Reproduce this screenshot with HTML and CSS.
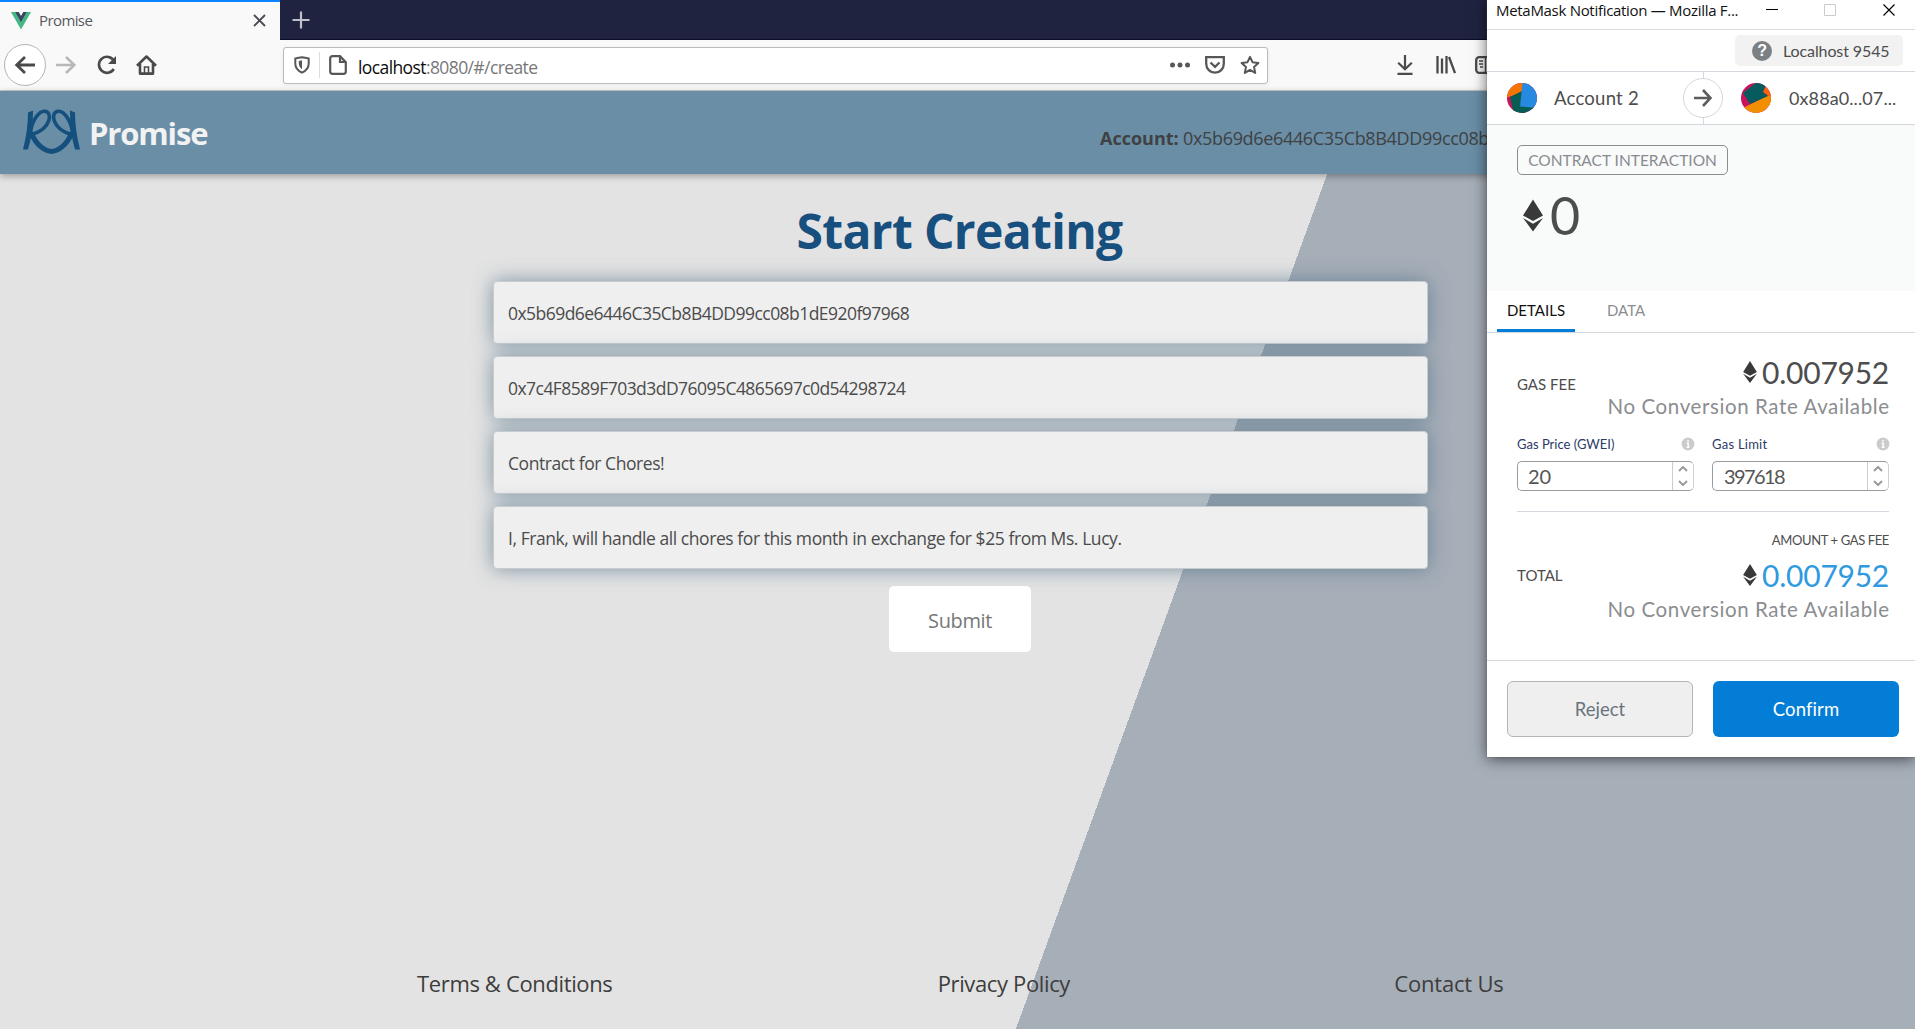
FILE: index.html
```html
<!DOCTYPE html>
<html lang="en">
<head>
<meta charset="utf-8">
<title>Promise</title>
<link rel="stylesheet" href="styles.css">
</head>
<body>
<svg class="defs" width="0" height="0" aria-hidden="true">
  <symbol id="eth" viewBox="0 0 20 32"><path fill="#393939" d="M10 0 20 16 10 21.5 0 16ZM0 18.5 10 24.2 20 18.5 10 32Z"/></symbol>
  <symbol id="info" viewBox="0 0 14 14"><circle cx="7" cy="7" r="6.4" fill="#cbcbcb"/><path d="M7 3.1v1.7M5.7 6.3h1.5v3.6M5.5 10.3h3.1" fill="none" stroke="#fff" stroke-width="1.5"/></symbol>
</svg>
<div class="browser">
  <div class="tabs">
    <div class="tab">
      <svg width="20" height="18" viewBox="0 0 20 18"><path fill="#41b883" d="M0 0h4l6 10.5L16 0h4L10 17.5Z"/><path fill="#35495e" d="M4 0h3.7L10 4l2.3-4H16l-6 10.5Z"/></svg>
      <span class="tab-name">Promise</span>
      <svg width="13" height="13" viewBox="0 0 13 13"><path d="m1 1 11 11M12 1 1 12" stroke="#4a4a4f" stroke-width="1.8"/></svg>
    </div>
    <svg class="plus" width="18" height="18" viewBox="0 0 18 18"><path d="M9 .5v17M.5 9h17" stroke="#c0c0c8" stroke-width="2.2"/></svg>
  </div>
  <div class="toolbar">
    <span class="back"><svg width="22" height="20" viewBox="0 0 22 20"><path d="M21 10H3m8-8-8.3 8 8.3 8" fill="none" stroke="#4a4a4b" stroke-width="2.8"/></svg></span>
    <svg class="fwd" width="22" height="20" viewBox="0 0 22 20"><path d="M1 10h18m-8-8 8.300 8-8.300 8" fill="none" stroke="#b8b8b9" stroke-width="2.6"/></svg>
    <svg class="reload" width="20" height="20" viewBox="0 0 20 20"><path d="M17 6A8 8 0 1 0 16.800 14" fill="none" stroke="#4a4a4b" stroke-width="2.6"/><path d="M19 1v8h-8Z" fill="#4a4a4b"/></svg>
    <svg class="home" width="21" height="20" viewBox="0 0 21 20"><path d="m1 10.700 9.500-9.200 9.500 9.200M4 9v9.600h13V9" fill="none" stroke="#4a4a4b" stroke-width="2.6" stroke-linejoin="round"/><path d="M8.500 18v-6h4v6" fill="none" stroke="#4a4a4b" stroke-width="1.600"/></svg>
    <div class="address">
      <svg width="16" height="18" viewBox="0 0 16 18"><path d="M1.300 2.500Q5 1.500 8 1.200q3 .3 6.700 1.300v5c0 4.500-3 7.500-6.700 9.200C4.300 15 1.300 12 1.300 7.500Z" fill="none" stroke="#57575a" stroke-width="2"/><path d="M8 4.300v9C5.800 11.500 4.800 9.700 4.800 7.500V5Z" fill="#57575a"/></svg>
      <i class="rule"></i>
      <svg width="18" height="20" viewBox="0 0 18 20"><path d="M3.500 1.200H11l5.800 6v9.300q0 2.300-2.300 2.300h-11Q1.200 18.800 1.200 16.500v-13q0-2.300 2.300-2.300ZM11 1.500V7h5.500" fill="none" stroke="#57575a" stroke-width="2.200"/></svg>
      <span class="url"><b>localhost</b>:8080/#/create</span>
      <svg class="dots" width="20" height="6" viewBox="0 0 20 6"><g fill="#57575a"><circle cx="2.500" cy="3" r="2.500"/><circle cx="10" cy="3" r="2.500"/><circle cx="17.500" cy="3" r="2.500"/></g></svg>
      <svg class="pocket" width="20" height="18" viewBox="0 0 20 18"><path d="M1.200 1.200h17.600v6.500c0 5.200-4 9-8.800 9s-8.800-3.800-8.800-9ZM5.500 6.500 10 10.800l4.500-4.300" fill="none" stroke="#57575a" stroke-width="2.300"/></svg>
      <svg width="20" height="20" viewBox="0 0 20 20"><path d="m10 1.800 2.500 5.400 5.900.7-4.400 4 1.200 6-5.200-3-5.200 3 1.200-6-4.400-4 5.900-.7Z" fill="none" stroke="#57575a" stroke-width="2" stroke-linejoin="round"/></svg>
    </div>
    <svg class="download" width="16" height="20" viewBox="0 0 16 20"><path d="M8 0v14M1.200 7.800 8 14.300l6.800-6.500M.5 18.800h15" fill="none" stroke="#4a4a4b" stroke-width="2.200"/></svg>
    <svg class="library" width="20" height="18" viewBox="0 0 20 18"><path d="M1.500 0v17.500M6 2.500v15M10.500 0v17.500M13 1l6 16" fill="none" stroke="#4a4a4b" stroke-width="2.300"/></svg>
    <svg class="sidebar" width="22" height="18" viewBox="0 0 22 18"><rect x="1.200" y="1.200" width="19.600" height="15.600" rx="3" fill="none" stroke="#4a4a4b" stroke-width="2.300"/><path d="M10.500 1v16M4 5h4M4 8h4M5 11h3" fill="none" stroke="#4a4a4b" stroke-width="1.500"/></svg>
  </div>
</div>
<div class="page">
  <header class="site-head">
    <svg class="logo" width="59" height="48" viewBox="0 0 59 48"><defs><g id="half"><path fill="#154f7e" d="M6 4.500 11 2.500Q11 26 6 41.500H1Q6 22 6 4.500Z"/><path d="M8.500 26C9 13 17 3 22.500 3.200 31 3.500 29.500 20 10.500 26.500" fill="none" stroke="#154f7e" stroke-width="3.600"/><path d="M9 24.500C14 37 23 43.500 30 43.500" fill="none" stroke="#154f7e" stroke-width="5"/></g></defs><use href="#half"/><use href="#half" transform="matrix(-1 0 0 1 59 0)"/></svg>
    <strong class="brand">Promise</strong>
    <p class="account"><b>Account:</b> 0x5b69d6e6446C35Cb8B4DD99cc08b1dE920f97968</p>
  </header>
  <main class="content">
    <h1 class="title">Start Creating</h1>
    <form class="form">
      <div class="field hex">0x5b69d6e6446C35Cb8B4DD99cc08b1dE920f97968</div>
      <div class="field hex">0x7c4F8589F703d3dD76095C4865697c0d54298724</div>
      <div class="field">Contract for Chores!</div>
      <div class="field">I, Frank, will handle all chores for this month in exchange for $25 from Ms. Lucy.</div>
      <button class="submit" type="button">Submit</button>
    </form>
  </main>
  <footer class="foot"><a class="terms">Terms &amp; Conditions</a><a class="privacy">Privacy Policy</a><a class="contact">Contact Us</a></footer>
</div>
<aside class="popup">
  <div class="p-title"><span class="p-name">MetaMask Notification — Mozilla F...</span>
    <svg width="130" height="14" viewBox="0 0 130 14"><path d="M0 6.500h12M117.500 1.500l11 11m0-11-11 11" fill="none" stroke="#000" stroke-width="1.200"/><path d="M58.500 1.500h11v11h-11Z" fill="none" stroke="#ccc"/></svg>
  </div>
  <div class="p-network"><div class="network"><span class="q">?</span><span class="net-name">Localhost 9545</span></div></div>
  <div class="p-accounts">
    <svg width="30" height="30" viewBox="0 0 30 30"><clipPath id="c"><circle cx="15" cy="15" r="15"/></clipPath><g clip-path="url(#c)"><path fill="#c8145b" d="M0 0h30v30H0Z"/><path fill="#f57402" d="M0 0h16v9L2 14 0 14Z"/><path fill="#075c54" d="m3 14 12-6 12 16-1 8H7Z"/><path fill="#258ae0" d="M15.500 0H30v25l-17-1.500Z"/></g></svg>
    <span class="from">Account 2</span>
    <span class="arrow"><svg width="18" height="18" viewBox="0 0 18 18"><path d="M0 9h16M9 1l7.500 8L9 17" fill="none" stroke="#5b5d5f" stroke-width="2.600"/></svg></span>
    <svg width="30" height="30" viewBox="0 0 30 30"><g clip-path="url(#c)"><path fill="#c8145b" d="M0 0h30v30H0Z"/><path fill="#f28e02" d="M2 25 28 12h2v18H5Z"/><path fill="#055b5d" d="M2 10 16-1l9 3-3 7 5 4L9 21Z"/><path fill="#fb640a" d="m25 3-3 6 5.500 4H30V5Z"/></g></svg>
    <span class="to">0x88a0...07...</span>
  </div>
  <div class="p-summary"><div class="tag"><span>CONTRACT INTERACTION</span></div><div class="zero"><svg width="20" height="33"><use href="#eth"/></svg><span>0</span></div></div>
  <nav class="p-tabs"><span class="on">DETAILS</span><span class="off">DATA</span></nav>
  <section class="p-details">
    <div class="fee"><span class="lab gas">GAS FEE</span><div class="vals"><div class="amount"><svg width="14" height="22"><use href="#eth"/></svg><span>0.007952</span></div><div class="rate">No Conversion Rate Available</div></div></div>
    <div class="inputs">
      <div class="group"><div class="gl"><span>Gas Price (GWEI)</span><svg width="14" height="14"><use href="#info"/></svg></div><div class="num"><span>20</span><i class="spin"><svg width="10" height="20" viewBox="0 0 10 20"><path d="m1 5 4-4 4 4M1 15l4 4 4-4" fill="none" stroke="#9b9b9b" stroke-width="2"/></svg></i></div></div>
      <div class="group"><div class="gl"><span class="glimit">Gas Limit</span><svg width="14" height="14"><use href="#info"/></svg></div><div class="num limit"><span>397618</span><i class="spin"><svg width="10" height="20" viewBox="0 0 10 20"><path d="m1 5 4-4 4 4M1 15l4 4 4-4" fill="none" stroke="#9b9b9b" stroke-width="2"/></svg></i></div></div>
    </div>
    <div class="agf"><span>AMOUNT + GAS FEE</span></div>
    <div class="fee total"><span class="lab tot">TOTAL</span><div class="vals"><div class="amount blue"><svg width="14" height="22"><use href="#eth"/></svg><span>0.007952</span></div><div class="rate">No Conversion Rate Available</div></div></div>
  </section>
  <div class="p-actions"><button class="btn reject" type="button">Reject</button><button class="btn confirm" type="button">Confirm</button></div>
</aside>
</body>
</html>
```
FILE: styles.css
```css
*{box-sizing:border-box}
body{margin:0;width:1915px;height:1029px;overflow:hidden;display:flex;flex-direction:column;position:relative;font-family:"Open Sans","Noto Sans",sans-serif;color:#444}
svg{display:block;flex:none}
.defs{position:absolute}
span,a,p,strong{white-space:nowrap}
.browser{height:91px;background:#f9f9fa;border-bottom:1px solid #ccc;flex:none}
.tabs{height:40px;background:#202340;display:flex;align-items:center;border-bottom:1px solid #0c0c2a}
.tab{width:280px;height:40px;background:#f9f9fa;border-top:2px solid #0a84ff;display:flex;align-items:center;padding:0 14px 0 11px}
.tab-name{flex:1;margin-left:8px;padding-bottom:1px;font-size:15px;letter-spacing:-.6px;color:#58585c}
.plus{margin-left:12px}
.toolbar{height:50px;display:flex;align-items:center}
.back{width:42px;height:42px;margin-left:4px;border:1px solid #b5b5b6;border-radius:50%;background:#fff;display:flex;align-items:center;justify-content:center}
.fwd{margin-left:9px}
.reload{margin-left:20px}
.home{margin-left:19px}
.address{width:985px;height:37px;margin-left:126px;border:1px solid #bbb;border-radius:3px;background:#fff;display:flex;align-items:center;padding:0 7px 0 10px;box-shadow:0 1px 4px #0001}
.rule{width:1px;height:26px;background:#ddd;margin:0 9px}
.url{flex:1;margin-left:11px;padding-top:3px;font-size:17.5px;letter-spacing:-.6px;color:#77777a}
.url b{font-weight:400;color:#0c0c0d}
.pocket{margin:0 15px}
.download{margin-left:129px}
.library{margin-left:23px}
.sidebar{margin-left:19px}
.page{flex:1;display:flex;flex-direction:column;background:linear-gradient(110.01deg,#e3e3e3 0 1275.5px,#a6aeb8 1275.5px)}
.site-head{height:83px;background:#698ea6;display:flex;align-items:center;padding-left:22px;box-shadow:0 2px 7px #0005;position:relative}
.logo{margin-top:-1px}
.brand{margin-left:8px;width:128px;font-size:31px;line-height:40px;color:#f2f2f2;letter-spacing:-1.15px}
.account{margin:10px 0 0 883px;font-size:18px;color:#3f4143;letter-spacing:-.34px}
.account b{letter-spacing:0}
.content{width:935px;margin-left:493px;padding-top:23px;display:flex;flex-direction:column;align-items:center}
.title{margin:0;padding-right:2px;height:84px;line-height:68px;font-size:48px;color:#174f7e;letter-spacing:-.65px;white-space:nowrap}
.form{width:100%;display:flex;flex-direction:column;gap:12px;align-items:center}
.field{width:100%;height:63px;background:#efefef;border:1px solid #c8cccf;border-radius:4px;display:flex;align-items:center;padding:0 14px;font-size:17.5px;letter-spacing:-.43px;color:#4b4b4b;box-shadow:0 0 20px rgb(81 113 136 / .7)}
.hex{letter-spacing:-.54px}
.submit{width:142px;height:66px;margin:5px 1px 0 0;border:0;border-radius:5px;background:#fff;color:#777;font:20px "Open Sans",sans-serif;letter-spacing:-.4px;padding:3px 6px 1px}
.foot{margin-top:auto;height:92px;padding-left:417px;display:flex;align-items:center;font-size:22px;color:#3d3d3d;letter-spacing:-.36px}
.foot a{width:521px}
.foot .privacy{width:457px}
.foot .contact{letter-spacing:-.2px}
.popup{position:absolute;left:1487px;top:0;width:428px;height:757px;background:#fff;display:flex;flex-direction:column;box-shadow:0 0 1px #555,0 2px 14px #0009;font-family:Lato,"Open Sans",sans-serif;color:#4d4d4d}
.p-title{height:30px;border-bottom:1px solid #d9dbde;display:flex;justify-content:space-between;padding:3px 19px 0 9px;font:15px/14px "Open Sans",sans-serif;letter-spacing:-.3px;color:#111}
.p-network{height:42px;border-bottom:1px solid #d2d8dd;display:flex;justify-content:flex-end;padding:5px 12px}
.network{width:168px;height:31px;background:#f2f2f2;border-radius:5px;display:flex;align-items:center;padding-left:17px;font-size:16px;letter-spacing:-.1px}
.q{width:20px;height:20px;border-radius:50%;background:#7b8084;color:#fff;font:bold 16px/20px "Liberation Sans",sans-serif;text-align:center;margin-right:11px}
.p-accounts{height:53px;border-bottom:1px solid #d2d8dd;display:flex;align-items:center;padding-left:20px;font-size:18px;background:linear-gradient(#d2d8dd,#d2d8dd) 216px 0/1px 100% no-repeat}
.from{width:129px;margin-left:17px;font-size:18.5px;letter-spacing:.25px}
.arrow{width:40px;height:40px;border:1px solid #d2d8dd;border-radius:50%;background:#fff;display:flex;align-items:center;justify-content:center;margin-right:18px}
.to{margin-left:18px;letter-spacing:.1px}
.p-summary{height:166px;background:#f9fafa;padding:20px 30px}
.tag{width:211px;height:30px;border:1px solid #8b8d90;border-radius:5px;display:flex;align-items:center;justify-content:center;font-size:15.5px;color:#888c90}
.zero{display:flex;align-items:center;height:60px;margin:10px 0 0 6px;font-size:52px;gap:7px}
.p-tabs{height:42px;border-bottom:1px solid #d2d8dd;padding-left:10px;display:flex;font-size:15px;line-height:39px}
.on{width:78px;border-bottom:3px solid #037dd6;text-align:center;color:#111}
.off{margin-left:32px;color:#8b8d90}
.p-details{height:328px;border-bottom:1px solid #d2d8dd;padding:14px 26px 0 30px}
.fee{height:81px;display:flex;justify-content:space-between;align-items:flex-start}
.lab{font-size:15px;line-height:20px;padding-top:27px}
.vals{padding-top:5px}
.amount{height:40px;display:flex;align-items:center;justify-content:flex-end;gap:5px;font-size:30px;letter-spacing:-.25px}
.blue{color:#2f9ae0}
.rate{height:28px;line-height:28px;font-size:20.5px;letter-spacing:.6px;margin-right:-.6px;color:#8b8d90;white-space:nowrap;text-align:right}
.inputs{display:flex;gap:18px;height:84px;border-bottom:1px solid #d2d8dd;padding-top:8px}
.group{width:177px}
.gl{display:flex;justify-content:space-between;align-items:center;height:16px;font-size:13px;color:#2c3a66}
.gl svg{margin-right:-1px}
.glimit{letter-spacing:.25px}
.num{height:30px;margin-top:9px;border:1px solid #9b9b9b;border-right-color:#d0d0d0;border-radius:5px;display:flex;justify-content:space-between;align-items:center;padding-left:10px;font-size:20px;line-height:26px;color:#555}
.limit{padding-left:11px;letter-spacing:-1.6px}
.spin{width:21px;height:28px;border-left:1px solid #ccc;display:flex;align-items:center;justify-content:center}
.agf{height:38px;padding-top:20px;text-align:right;font-size:13px;letter-spacing:-.38px}
.total{height:76px;margin-top:5px}
.tot{padding-top:10px}
.total .vals{padding-top:0}
.p-actions{height:96px;display:flex;gap:20px;padding:20px 16px 20px 20px}
.btn{height:56px;width:186px;border-radius:6px;font:18.5px Lato,sans-serif;padding-bottom:2px}
.reject{border:1px solid #b5b5b5;background:#efefef;color:#6a737d}
.confirm{border:0;background:#037dd6;color:#fff;letter-spacing:.1px}
```
